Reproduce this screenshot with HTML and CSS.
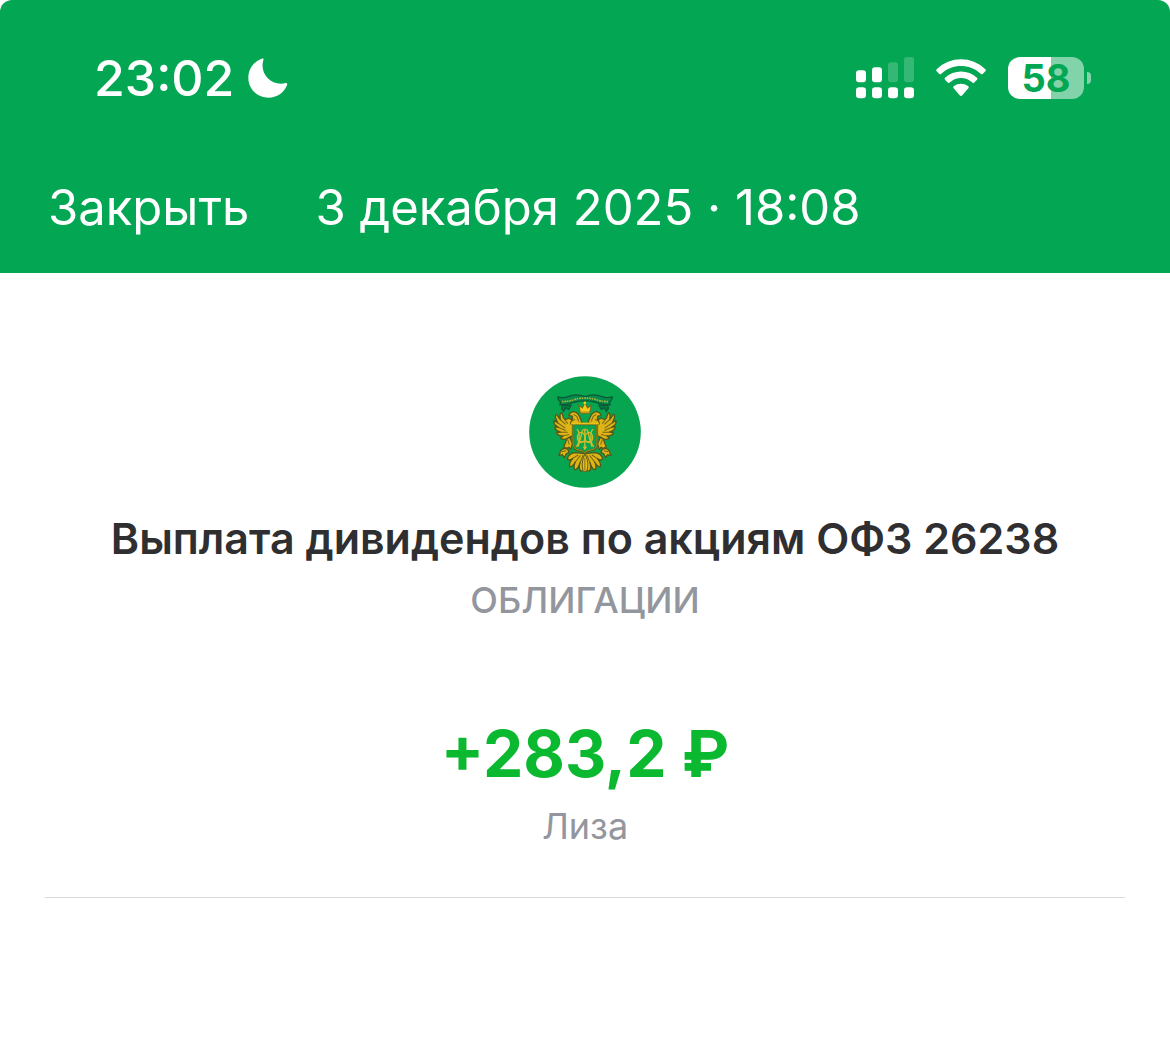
FILE: index.html
```html
<!DOCTYPE html>
<html lang="ru">
<head>
    <meta charset="UTF-8">
    <meta name="viewport" content="width=device-width, initial-scale=1.0">
    <title>Выплата дивидендов</title>
    <link rel="stylesheet" href="styles.css">
</head>
<body>
    <header class="header">
        <div class="status-bar">
            <div class="status-left">
                <span class="time">23:02</span>
                <svg class="moon" viewBox="0 0 120 120" aria-hidden="true">
                    <path d="M41 2C46 0 48 2 46 7C34 45 68 85 111 76C116 74 119 77 117 82C107 106 86 119 62 119C27 119 1 92 1 60C1 33 17 11 41 2Z"/>
                </svg>
            </div>
            <div class="status-right">
                <svg class="signal" viewBox="0 0 174 126" aria-hidden="true">
                    <rect x="0" y="40" width="30" height="36" rx="9"/>
                    <rect x="48" y="31" width="30" height="45" rx="9"/>
                    <rect class="dim" x="96" y="16" width="30" height="60" rx="9"/>
                    <rect class="dim" x="144" y="0" width="30" height="76" rx="9"/>
                    <rect x="0" y="91" width="30" height="33" rx="10"/>
                    <rect x="48" y="91" width="30" height="33" rx="10"/>
                    <rect x="96" y="91" width="30" height="33" rx="10"/>
                    <rect x="144" y="91" width="30" height="33" rx="10"/>
                </svg>
                <svg class="wifi" viewBox="0 0 150 114" aria-hidden="true">
                    <path d="M2 31C43-9 107-9 148 31Q151 34 148 37L140 45Q137 47 134 44C101 13 49 13 16 44Q13 47 10 45L2 37Q-1 34 2 31Z"/>
                    <path d="M27 56C54 31 96 31 123 56Q126 59 123 62L114 71Q111 73 108 70C90 53 60 53 42 70Q39 73 36 71L27 62Q24 59 27 56Z"/>
                    <path d="M53 82C66 72 84 72 97 82Q100 85 97 88L79 109Q75 113 71 109L53 88Q50 85 53 82Z"/>
                </svg>
                <div class="battery">
                    <span class="battery-body">58</span>
                    <span class="battery-cap"></span>
                </div>
            </div>
        </div>
        <nav class="nav-bar">
            <button class="close" type="button">Закрыть</button>
            <time class="date" datetime="2025-12-03T18:08">3 декабря 2025 · 18:08</time>
        </nav>
    </header>

    <main class="payment">
        <svg class="emblem" viewBox="28 19 333 333" aria-hidden="true">
            <defs>
                <g id="wing" fill="#dfb516" stroke="#55581a" stroke-width="4" stroke-linejoin="round">
                    <!-- wing feathers -->
                    <path d="M158 150L146 144Q136 152 131 144L126 129Q120 128 120 137L121 149L110 133Q105 134 107 143L113 158L103 151Q100 155 105 164L116 172L105 170Q104 177 113 182L122 186L110 187Q112 196 124 197L130 197L122 204Q130 210 142 205L158 196Z"/>
                    <!-- head -->
                    <path d="M186 158L180 144Q174 127 161 125Q150 126 146 137L156 138Q160 146 154 153L152 161L166 163Z"/>
                    <!-- leg and claw -->
                    <path d="M149 201Q138 205 137 216L131 230L140 234L147 231L152 238L157 220Z"/>
                    <path d="M134 234Q124 235 121 245L117 256L127 253L133 262L139 250L147 247L143 236Z"/>
                    <!-- tail feathers -->
                    <path d="M164 247Q145 250 142 266Q148 272 158 264Q146 276 149 289Q158 289 166 274Q158 290 165 298Q174 296 180 276Q174 293 182 302Q190 302 195 287V250Z"/>
                    <g fill="none" stroke="#756519" stroke-width="3">
                        <path d="M121 149L137 163M113 158L136 174M116 172L137 181M122 186L143 186M130 197L147 193M131 144L143 161"/>
                        <path d="M161 133L170 139L176 154M154 153L165 148M143 208L148 223M126 244L138 241"/>
                        <path d="M158 264L174 254M166 274L181 255M180 276L189 254"/>
                    </g>
                </g>
            </defs>
            <circle cx="194.5" cy="185.5" r="166" fill="#08a551"/>
            <!-- ribbon -->
            <path d="M122 97Q112 87 114 81Q130 86 144 80Q168 70 194 80Q220 70 245 80Q259 86 275 81Q277 87 267 97L269 105Q244 105 226 97Q194 89 163 97Q144 105 120 105Z" fill="#078b4a" stroke="#0a5a36" stroke-width="4"/>
            <path d="M126 95Q149 95 166 88Q194 81 224 88Q240 95 263 95" fill="none" stroke="#a8b23b" stroke-width="5" stroke-dasharray="4 3 6 2"/>
            <path d="M127 106L153 106L146 119L137 113L131 124L125 115ZM262 106L236 106L243 119L252 113L258 124L264 115Z" fill="#077b40" stroke="#0a5a36" stroke-width="4"/>
            <use href="#wing"/>
            <use href="#wing" transform="translate(389 0) scale(-1 1)"/>
            <!-- crown -->
            <path d="M181 130L176 106L187 114L194 98L202 114L213 106L208 130Z" fill="#f7cb1c" stroke="#77691c" stroke-width="3"/>
            <circle cx="194" cy="99" r="4" fill="#f7cb1c"/>
            <path d="M182 126H207" stroke="#b78916" stroke-width="3"/>
            <!-- shield -->
            <path d="M159 162H230V218Q230 238 213 240Q201 241 194 249Q188 241 176 240Q159 238 159 218Z" fill="#08a551" stroke="#55601c" stroke-width="7"/>
            <path d="M159 162H230V218Q230 237 212 239Q200 240 194 247Q188 240 177 239Q159 237 159 218Z" fill="none" stroke="#b8a821" stroke-width="2"/>
            <path d="M153 160H236" stroke="#ebc21a" stroke-width="5"/>
            <!-- monogram -->
            <g fill="none" stroke="#d0ba2b" stroke-width="4">
                <path d="M194 176V236M186 179H203M190 229L194 236L199 229"/>
                <ellipse cx="183" cy="202" rx="11" ry="15"/>
                <ellipse cx="206" cy="202" rx="11" ry="15"/>
                <path d="M170 178Q178 181 177 202Q176 224 168 229M219 178Q211 181 212 202Q213 224 221 229M187 181Q180 210 174 229M202 181Q209 210 215 229M177 214H212"/>
            </g>
            <path d="M194 250Q183 273 188 299Q194 308 201 299Q207 273 194 250Z" fill="#e9bf19" stroke="#68641a" stroke-width="3"/>
            <path d="M194 262V300" fill="none" stroke="#86721b" stroke-width="3"/>
        </svg>
        <h1 class="title">Выплата дивидендов по акциям ОФЗ 26238</h1>
        <p class="category">ОБЛИГАЦИИ</p>
        <p class="amount">+283,2 ₽</p>
        <p class="account">Лиза</p>
        <hr class="divider">
    </main>
</body>
</html>
```
FILE: styles.css
```css
:root {
    --header-color: #03a753;
    --amount-color: #0ab92f;
    --text-color: #2f2f32;
    --muted-color: #94969e;
    --border-color: #d9d9db;
}
* {
    box-sizing: border-box;
}
body {
    margin: 0;
    background-color: white;
    color: var(--text-color);
    font-family: Inter, "Liberation Sans", sans-serif;
}
.header {
    background-color: var(--header-color);
    color: white;
    border-radius: 12px 12px 0 0;
    padding: 48px 48px 35px;
}
.status-bar {
    display: flex;
    justify-content: space-between;
    align-items: center;
    height: 60px;
    padding: 0 31px 0 46px;
}
.status-left,
.status-right {
    display: flex;
    align-items: center;
}
.status-left {
    gap: 14px;
}
.status-right {
    gap: 22px;
}
.time {
    font-size: 50px;
    font-weight: 500;
    line-height: 60px;
}
.moon {
    width: 40px;
    height: 40px;
    fill: white;
}
.signal {
    width: 58px;
    height: 42px;
    fill: white;
}
.signal .dim {
    opacity: 0.2;
}
.wifi {
    width: 50px;
    height: 38px;
    fill: white;
}
.battery {
    display: flex;
    align-items: center;
    gap: 3px;
}
.battery-body {
    width: 76px;
    height: 42px;
    border-radius: 12px;
    background: linear-gradient(to right, white 57%, #82d3a9 57%);
    color: var(--header-color);
    font-size: 38px;
    font-weight: 700;
    line-height: 42px;
    text-align: center;
}
.battery-cap {
    width: 4px;
    height: 12px;
    border-radius: 0 4px 4px 0;
    background-color: #82d3a9;
}
.nav-bar {
    display: flex;
    align-items: center;
    gap: 66px;
    margin-top: 70px;
}
.close,
.date {
    font-size: 49px;
    font-weight: 400;
    line-height: 60px;
}
.close {
    padding: 0;
    border: none;
    background: none;
    color: inherit;
    font-family: inherit;
    cursor: pointer;
}
.payment {
    display: flex;
    flex-direction: column;
    align-items: center;
    padding: 103px 45px 0;
    text-align: center;
}
.emblem {
    width: 112px;
    height: 112px;
}
.title {
    margin: 24px 0 0;
    font-size: 43px;
    font-weight: 600;
    line-height: 52px;
}
.category,
.account {
    margin: 0;
    color: var(--muted-color);
    font-size: 36px;
    line-height: 44px;
}
.category {
    margin-top: 14px;
    font-weight: 500;
}
.amount {
    margin: 92px 0 0;
    color: var(--amount-color);
    font-size: 64px;
    font-weight: 700;
    line-height: 80px;
}
.account {
    margin-top: 10px;
}
.divider {
    width: 100%;
    margin: 49px 0 0;
    border: none;
    border-top: 1px solid var(--border-color);
}
```
